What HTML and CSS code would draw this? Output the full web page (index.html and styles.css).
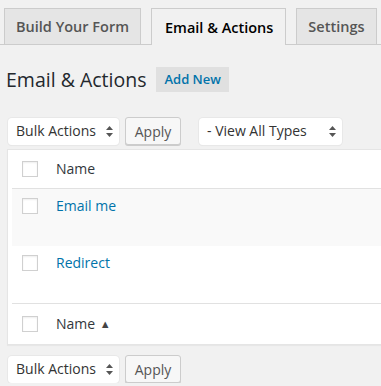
FILE: index.html
```html
<!DOCTYPE html>
<html lang="en">
<head>
    <meta charset="UTF-8">
    <title>Email &amp; Actions</title>
    <link rel="stylesheet" href="styles.css">
</head>
<body>
    <nav class="tabs">
        <a class="tab">Build Your Form</a>
        <a class="tab active">Email &amp; Actions</a>
        <a class="tab">Settings</a>
    </nav>

    <div class="wrap">
        <div class="title-row">
            <h1>Email &amp; Actions</h1>
            <a class="add-new">Add New</a>
        </div>

        <div class="toolbar">
            <div class="select sel-bulk">Bulk Actions
                <svg class="arrows" width="7" height="11" viewBox="0 0 7 11"><path d="M3.5 0L7 4H0z M3.5 11L0 7h7z" fill="#555"/></svg>
            </div>
            <button class="btn">Apply</button>
            <div class="select sel-types">- View All Types
                <svg class="arrows" width="7" height="11" viewBox="0 0 7 11"><path d="M3.5 0L7 4H0z M3.5 11L0 7h7z" fill="#555"/></svg>
            </div>
        </div>

        <div class="list-table">
            <div class="row head">
                <span class="check"></span>
                <span class="col-name">Name</span>
            </div>
            <div class="row item alt">
                <span class="check"></span>
                <a class="col-name link">Email me</a>
            </div>
            <div class="row item">
                <span class="check"></span>
                <a class="col-name link">Redirect</a>
            </div>
            <div class="row foot">
                <span class="check"></span>
                <span class="col-name">Name <span class="sort">&#9650;</span></span>
            </div>
        </div>

        <div class="toolbar bottom">
            <div class="select sel-bulk">Bulk Actions
                <svg class="arrows" width="7" height="11" viewBox="0 0 7 11"><path d="M3.5 0L7 4H0z M3.5 11L0 7h7z" fill="#555"/></svg>
            </div>
            <button class="btn">Apply</button>
        </div>
    </div>
</body>
</html>
```

FILE: styles.css
```css
body {
    margin: 0;
    background-color: #f1f1f1;
    font-family: "Open Sans", Arial, sans-serif;
    color: #444;
    overflow: hidden;
}
.tabs {
    display: flex;
    gap: 10px;
    padding: 8px 0 0 4px;
    border-bottom: 1px solid #ccc;
    height: 36px;
}
.tab {
    display: flex;
    align-items: center;
    height: 35px;
    padding: 0 11px;
    border: 1px solid #ccc;
    border-bottom: none;
    background-color: #e5e5e5;
    color: #555;
    font-size: 14.5px;
    font-weight: 600;
    white-space: nowrap;
}
.tab.active {
    background-color: #f1f1f1;
    color: #000;
    height: 36px;
    margin-bottom: -1px;
    padding: 0 12px 0 13px;
}
.wrap {
    padding: 0 0 0 7px;
}
.title-row {
    display: flex;
    align-items: center;
    margin-top: 21px;
    height: 26px;
}
h1 {
    margin: 0 0 0 -1px;
    font-size: 19.5px;
    font-weight: 400;
    color: #23282d;
}
.add-new {
    margin-left: 10px;
    padding: 0 8px;
    height: 25px;
    line-height: 25px;
    background-color: #e0e0e0;
    color: #0073aa;
    font-size: 13px;
    font-weight: 600;
}
.toolbar {
    display: flex;
    align-items: center;
    margin-top: 25px;
    height: 28px;
}
.toolbar.bottom {
    margin-top: 10px;
}
.select {
    position: relative;
    box-sizing: border-box;
    height: 27px;
    line-height: 26px;
    padding-left: 8px;
    margin-left: 1px;
    background-color: #fff;
    border-radius: 4px;
    box-shadow: 0 0 0 1px #e8e8e8, 0 1px 1px rgba(0,0,0,0.06);
    font-size: 14px;
    color: #333;
}
.sel-bulk {
    width: 111px;
}
.sel-types {
    width: 143px;
    margin-left: 18px;
}
.arrows {
    position: absolute;
    right: 6px;
    top: 8px;
}
.btn {
    box-sizing: border-box;
    height: 28px;
    width: 56px;
    margin-left: 6px;
    padding: 0;
    border: 1px solid #ccc;
    border-radius: 3px;
    background-color: #f7f7f7;
    box-shadow: 0 1px 0 #ccc;
    font-family: "Open Sans", Arial, sans-serif;
    font-size: 14px;
    color: #555;
}
.list-table {
    margin-top: 4px;
    background-color: #fff;
    border: 1px solid #e5e5e5;
    border-right: none;
    padding-left: 4px;
    box-shadow: 0 1px 1px rgba(0,0,0,0.04);
}
.row {
    display: flex;
    align-items: flex-start;
    box-sizing: border-box;
    font-size: 14px;
}
.row.head {
    height: 39px;
    align-items: center;
    border-bottom: 1px solid #e1e1e1;
}
.row.item {
    height: 57px;
    padding-top: 9px;
}
.row.item.alt {
    background-color: #f9f9f9;
}
.row.foot {
    height: 41px;
    align-items: center;
    border-top: 1px solid #e1e1e1;
}
.check {
    box-sizing: border-box;
    width: 16px;
    height: 16px;
    margin-left: 10px;
    border: 1px solid #d0d0d0;
    background-color: #fff;
    box-shadow: inset 0 1px 2px rgba(0,0,0,0.07);
}
.col-name {
    margin-left: 18px;
    color: #32373c;
    line-height: 16px;
}
.link {
    color: #0073aa;
}
.sort {
    font-size: 11px;
    margin-left: 1px;
    vertical-align: 1px;
    color: #444;
}
```
